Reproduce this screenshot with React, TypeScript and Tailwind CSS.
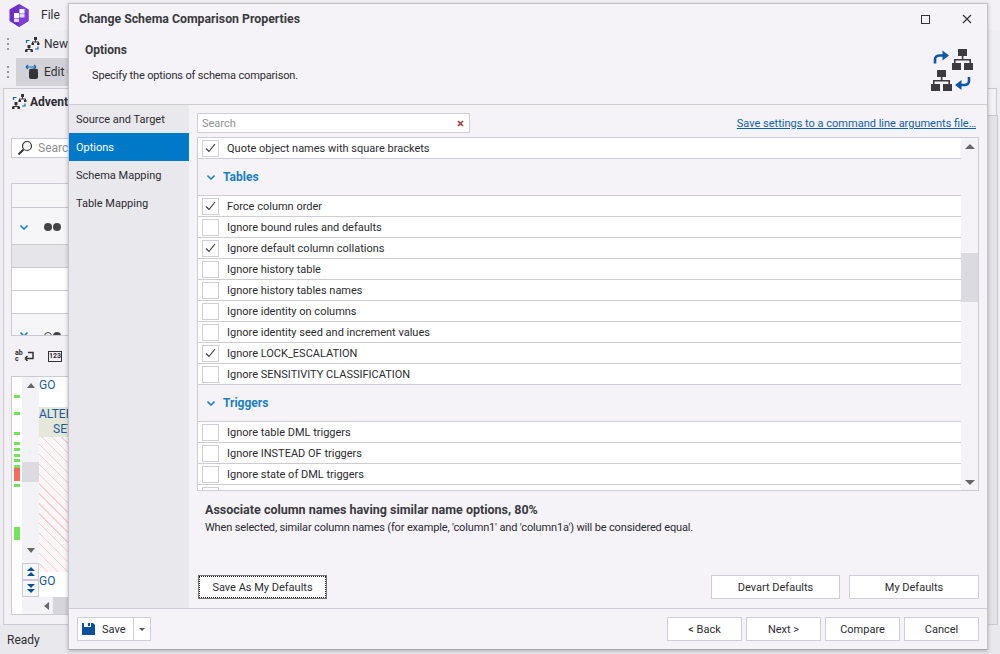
import React from "react";

function TreeIcon({ x, y }: { x: number; y: number }) {
  return (
    <g fill="#3c3c40" transform={`translate(${x} ${y})`}>
      <rect x="6" y="0" width="9" height="7" />
      <path d="M9.800 7h1.600v3H19v4h-1.600v-2.400H3.600V14H2v-4h7.800z" />
      <rect x="0" y="14" width="9" height="7" />
      <rect x="12" y="14" width="9" height="7" />
    </g>
  );
}

function CompareIcon() {
  return (
    <svg width="44" height="46" viewBox="0 0 44 46" className="block">
      <TreeIcon x={22} y={2} />
      <TreeIcon x={1} y={23} />
      <path d="M5 16.500v-4c0-2.500 2-4 4.500-4H14" fill="none" stroke="#0a58a8" strokeWidth="2.600" />
      <path d="M12.500 3.500l6.500 5-6.500 5z" fill="#0a58a8" />
      <path d="M39 30v4c0 2.500-2 4-4.500 4H30" fill="none" stroke="#0a58a8" strokeWidth="2.600" />
      <path d="M31.500 33l-6.500 5 6.500 5z" fill="#0a58a8" />
    </svg>
  );
}

function SmallCompare() {
  return (
    <svg width="15" height="15" viewBox="0 0 15 15" className="block shrink-0">
      <g fill="#333">
        <rect x="9" y="0" width="3" height="3" />
        <path d="M10 3h1v1.500h3V6.500h-1V5.500H8v1H7V4.500h3z" />
        <rect x="6.500" y="6" width="2.500" height="2" />
        <rect x="12" y="6" width="2.500" height="2" />
        <rect x="2.500" y="8" width="3" height="3" />
        <path d="M3.500 11h1v1h3v2h-1v-1H1.500v1h-1v-2h3z" />
        <rect x="0" y="13" width="2.500" height="2" />
        <rect x="5.500" y="13" width="2.500" height="2" />
      </g>
      <path d="M1.500 6V3.500h3M13 9.500V12h-3" fill="none" stroke="#0a6ab8" strokeWidth="1.200" />
    </svg>
  );
}

function Grip() {
  return (
    <div className="flex w-[3px] flex-col gap-[3px]">
      <span className="h-[2px] w-[2px] bg-[#9a9aa2]" />
      <span className="h-[2px] w-[2px] bg-[#9a9aa2]" />
      <span className="h-[2px] w-[2px] bg-[#9a9aa2]" />
    </div>
  );
}

function Chevron() {
  return (
    <svg width="8" height="5" viewBox="0 0 8 5" className="block shrink-0">
      <path d="M0.500 0.600L4 4L7.500 0.600" fill="none" stroke="#1b80c4" strokeWidth="1.500" />
    </svg>
  );
}

function Background() {
  const marks = [
    "mt-[18px] h-[3px] bg-[#6fe55a]",
    "mt-[14px] h-[3px] bg-[#6fe55a]",
    "mt-[17px] h-[3px] bg-[#6fe55a]",
    "mt-[7px] h-[3px] bg-[#6fe55a]",
    "mt-[3px] h-[3px] bg-[#6fe55a]",
    "mt-[3px] h-[3px] bg-[#6fe55a]",
    "mt-[2px] h-[3px] bg-[#6fe55a]",
    "mt-[3px] h-[3px] bg-[#6fe55a]",
    "h-[13px] bg-[#ff6a60]",
    "mt-[3px] h-[3px] bg-[#6fe55a]",
    "mt-[40px] h-[13px] bg-[#6fe55a]",
  ];
  return (
    <div className="flex h-[654px] w-[1000px] flex-col overflow-hidden bg-[#eeedf2] text-[12px] text-[#2e2e33]">
      <div className="flex h-[30px] shrink-0 items-center bg-[#f3f1f6] pl-[9px]">
        <svg width="20" height="23" viewBox="0 0 20 23" className="block shrink-0">
          <path d="M10 0L19.500 5.500V17L10 23L0.500 17V5.500z" fill="#6a2fc4" />
          <path d="M10 0L19.500 5.500V17L10 23z" fill="#7d3fd8" />
          <rect x="5" y="9" width="5" height="5" fill="#fff" />
          <rect x="5" y="14.500" width="5" height="3.500" fill="#e7d8ff" />
          <rect x="10.500" y="5" width="5" height="4" fill="#fff" />
          <rect x="10.500" y="9.500" width="5" height="4" fill="#e7d8ff" />
        </svg>
        <span className="ml-[12px]">File</span>
      </div>
      <div className="flex h-[28px] shrink-0 items-center bg-[#efeef3] pl-[7px]">
        <Grip />
        <div className="ml-[15px]"><SmallCompare /></div>
        <span className="ml-[4px]">New</span>
      </div>
      <div className="flex h-[28px] shrink-0 items-center bg-[#efeef3] pl-[7px]">
        <Grip />
        <div className="ml-[6px] flex h-[28px] w-[52px] items-center overflow-hidden whitespace-nowrap bg-[#d2d1d8] pl-[9px]">
          <svg width="15" height="16" viewBox="0 0 15 16" className="block shrink-0">
            <ellipse cx="8.500" cy="6" rx="4.500" ry="1.500" fill="#333" />
            <rect x="4" y="6" width="9" height="9" rx="2" fill="#333" />
            <path d="M1 3h10M1 3l2-2M1 3l2 2M11 3L9 1M11 3L9 5" stroke="#0a6ab8" strokeWidth="1.200" fill="none" />
          </svg>
          <span className="ml-[4px]">Edit C</span>
        </div>
      </div>
      <div className="flex h-[539px] shrink-0 pl-[3px] pr-[3px] pt-[2px]">
        <div className="flex h-[537px] w-full flex-col border border-[#cbc9d4] bg-[#f3f1f6]">
          <div className="flex h-[25px] shrink-0 items-center pl-[8px]">
            <SmallCompare />
            <span className="ml-[3px] font-bold">Adventure</span>
          </div>
          <div className="mt-[24px] ml-[7px] flex h-[20px] w-[200px] shrink-0 items-center border border-[#cbc9d4] bg-white pl-[5px]">
            <svg width="16" height="16" viewBox="0 0 16 16" className="block shrink-0">
              <circle cx="10" cy="6" r="4.500" fill="#f4f4f4" stroke="#333" strokeWidth="1.200" />
              <path d="M6.500 9.500L1.500 14.500" stroke="#333" strokeWidth="2" />
            </svg>
            <span className="ml-[5px] text-[#8d8d93]">Search</span>
          </div>
          <div className="mt-[25px] ml-[7px] flex h-[153px] w-[300px] shrink-0 flex-col overflow-hidden border border-[#cbc9d4] bg-white">
            <div className="h-[24px] shrink-0 border-b border-[#cbc9d4] bg-[#f6f5f8]" />
            <div className="flex h-[37px] shrink-0 items-center border-b border-[#cbc9d4] bg-[#f6f5f8] pl-[8px] pt-[2px]">
              <Chevron />
              <span className="ml-[16px] h-[8px] w-[8px] rounded-full bg-[#444]" />
              <span className="ml-[1px] h-[8px] w-[8px] rounded-full bg-[#444]" />
            </div>
            <div className="h-[23px] shrink-0 border-b border-[#cbc9d4] bg-[#e6e5ea]" />
            <div className="h-[23px] shrink-0 border-b border-[#cbc9d4] bg-white" />
            <div className="h-[23px] shrink-0 border-b border-[#cbc9d4] bg-white" />
            <div className="flex h-[23px] shrink-0 items-end bg-[#f6f5f8] pl-[8px]">
              <Chevron />
              <span className="ml-[16px] mb-[-3px] h-[8px] w-[8px] rounded-full border border-[#444]" />
              <span className="ml-[1px] mb-[-3px] h-[8px] w-[8px] rounded-full bg-[#444]" />
            </div>
          </div>
          <div className="flex h-[40px] shrink-0 items-center pl-[11px]">
            <div className="flex items-center">
              <div className="flex w-[9px] flex-col text-[7px] leading-[6px] font-bold">
                <span>ab</span>
                <span>c</span>
              </div>
              <svg width="10" height="10" viewBox="0 0 10 10" className="block shrink-0">
                <path d="M4 1.500h5v6H1M1 7.500l2.500-2.500M1 7.500l2.500 2.500" fill="none" stroke="#333" strokeWidth="1.500" />
              </svg>
            </div>
            <div className="ml-[14px] flex h-[11px] w-[14px] items-center justify-center border border-[#333] text-[7px] leading-none font-bold">123</div>
          </div>
          <div className="ml-[7px] flex h-[239px] w-[300px] shrink-0 border border-[#cbc9d4] bg-white">
            <div className="flex w-[10px] shrink-0 flex-col px-[2px]">
              {marks.map((c, i) => (
                <span key={i} className={c} />
              ))}
            </div>
            <div className="flex min-w-0 flex-1 flex-col">
              <div className="flex h-[220px] shrink-0">
                <div className="flex w-[17px] shrink-0 flex-col items-center bg-[#f3f2f7]">
                  <span className="mt-[6px] h-0 w-0 border-x-[4px] border-b-[5px] border-x-transparent border-b-[#666]" />
                  <span className="mt-[74px] h-[20px] w-full bg-[#dcdbe1]" />
                  <span className="mt-[66px] h-0 w-0 border-x-[4px] border-t-[5px] border-x-transparent border-t-[#666]" />
                  <div className="mt-[10px] flex h-[17px] w-[17px] shrink-0 flex-col items-center justify-center gap-[1px] border border-[#cbc9d4] bg-[#f7f6f9]">
                    <span className="h-0 w-0 border-x-[4px] border-b-[4px] border-x-transparent border-b-[#0a4f9c]" />
                    <span className="h-0 w-0 border-x-[4px] border-b-[4px] border-x-transparent border-b-[#0a4f9c]" />
                  </div>
                  <div className="flex h-[17px] w-[17px] shrink-0 flex-col items-center justify-center gap-[1px] border border-[#cbc9d4] bg-[#f7f6f9]">
                    <span className="h-0 w-0 border-x-[4px] border-t-[4px] border-x-transparent border-t-[#0a4f9c]" />
                    <span className="h-0 w-0 border-x-[4px] border-t-[4px] border-x-transparent border-t-[#0a4f9c]" />
                  </div>
                </div>
                <div className="flex flex-col text-[#1a5a9e]">
                  <span className="h-[30px] leading-[16px]">GO</span>
                  <div className="h-[30px] w-[200px] bg-[#e4e7d9]">
                    <div className="h-[15px] leading-[15px]">ALTER</div>
                    <div className="pl-[14px] leading-[15px]">SET</div>
                  </div>
                  <div className="h-[135px] w-[200px] bg-[repeating-linear-gradient(45deg,#fbf6f7_0px,#fbf6f7_6px,#f7cdcd_6px,#f7cdcd_7px)]" />
                  <span className="mt-[1px] leading-[16px]">GO</span>
                </div>
              </div>
              <div className="flex h-[17px] shrink-0 items-center bg-[#f3f2f7] pl-[22px]">
                <span className="h-0 w-0 border-y-[4px] border-r-[5px] border-y-transparent border-r-[#666]" />
                <span className="ml-[4px] h-[17px] w-[100px] bg-[#d6d5db]" />
              </div>
            </div>
          </div>
        </div>
      </div>
      <div className="flex h-[29px] shrink-0 items-center bg-[#e9e8ed] pl-[7px]">Ready</div>
    </div>
  );
}

function Check({ on }: { on?: boolean }) {
  return (
    <span className="flex h-[17px] w-[17px] shrink-0 items-center justify-center border border-[#cfcdd7] bg-white">
      {on && (
        <svg width="11" height="10" viewBox="0 0 11 10" className="block">
          <path d="M1 5.500L4 8.500L10 1" fill="none" stroke="#333" strokeWidth="1.100" />
        </svg>
      )}
    </span>
  );
}

function Row({ label, on }: { label: string; on?: boolean }) {
  return (
    <div className="flex h-[21px] shrink-0 items-center border-b border-[#cdcbd6] bg-white pl-[4px]">
      <Check on={on} />
      <span className="ml-[8px] whitespace-nowrap pt-[2px]">{label}</span>
    </div>
  );
}

function Group({ label }: { label: string }) {
  return (
    <div className="flex h-[37px] shrink-0 items-center border-b border-[#cdcbd6] pl-[9px]">
      <Chevron />
      <span className="ml-[8px] text-[12px] font-bold text-[#1a7fc0]">{label}</span>
    </div>
  );
}

function Btn({ label, w, focus }: { label: string; w: string; focus?: boolean }) {
  return (
    <button className={`flex h-[24px] items-center justify-center border bg-white pt-[2px] ${w} ${focus ? "border-[#777] outline-1 -outline-offset-2 outline-dotted outline-[#222]" : "border-[#cfcdd7]"}`}>
      {label}
    </button>
  );
}

function Dialog() {
  return (
    <div className="absolute left-[68px] top-[3px] flex h-[647px] w-[920px] flex-col border border-[#c4c3cc] border-b-[#a5a4ac] bg-[#f5f3f8] text-[11px] text-[#2b2b30] shadow-[0_1px_4px_rgba(0,0,0,0.25)]">
      <div className="h-[101px] shrink-0 border-b border-[#cdcbd6]">
        <div className="flex h-[30px] items-center pl-[10px] pr-[15px]">
          <span className="text-[12.3px] font-bold text-[#3a3a40]">Change Schema Comparison Properties</span>
          <svg width="9" height="9" viewBox="0 0 9 9" className="ml-auto mr-[32px] block">
            <rect x="0.500" y="0.500" width="8" height="8" fill="none" stroke="#333" />
          </svg>
          <svg width="10" height="10" viewBox="0 0 10 10" className="block">
            <path d="M1 1l8 8M9 1l-8 8" stroke="#333" strokeWidth="1.200" />
          </svg>
        </div>
        <div className="flex">
          <div className="flex-1">
            <div className="mt-[7px] pl-[16px] text-[12px] font-bold text-[#3a3a40]">Options</div>
            <div className="mt-[9px] pl-[23px] tracking-[-0.15px]">Specify the options of schema comparison.</div>
          </div>
          <div className="mr-[13px] mt-[13px]"><CompareIcon /></div>
        </div>
      </div>
      <div className="flex h-[503px] shrink-0">
        <div className="w-[120px] shrink-0 bg-[#e9e8ec]">
          <div className="flex h-[28px] items-center pl-[7px] pt-[2px]">Source and Target</div>
          <div className="flex h-[28px] items-center bg-[#0079c8] pl-[7px] pt-[2px] text-white">Options</div>
          <div className="flex h-[28px] items-center pl-[7px] pt-[2px]">Schema Mapping</div>
          <div className="flex h-[28px] items-center pl-[7px] pt-[2px]">Table Mapping</div>
        </div>
        <div className="flex flex-1 flex-col px-[8px]">
          <div className="mt-[8px] flex h-[20px] shrink-0 items-center justify-between">
            <div className="flex h-[20px] w-[273px] items-center justify-between border border-[#cfcdd7] bg-white pl-[4px] pr-[5px]">
              <span className="pt-[2px] text-[#8f8f95]">Search</span>
              <svg width="7" height="7" viewBox="0 0 7 7" className="block">
                <path d="M1 1l5 5M6 1l-5 5" stroke="#b0322c" strokeWidth="1.600" />
              </svg>
            </div>
            <a className="mr-[3px] pt-[2px] text-[#0f5fa8] underline">Save settings to a command line arguments file…</a>
          </div>
          <div className="mt-[4px] flex h-[354px] shrink-0 overflow-hidden border border-[#cdcbd6]">
            <div className="flex min-w-0 flex-1 flex-col overflow-hidden">
              <Row label="Quote object names with square brackets" on />
              <Group label="Tables" />
              <Row label="Force column order" on />
              <Row label="Ignore bound rules and defaults" />
              <Row label="Ignore default column collations" on />
              <Row label="Ignore history table" />
              <Row label="Ignore history tables names" />
              <Row label="Ignore identity on columns" />
              <Row label="Ignore identity seed and increment values" />
              <Row label="Ignore LOCK_ESCALATION" on />
              <Row label="Ignore SENSITIVITY CLASSIFICATION" />
              <Group label="Triggers" />
              <Row label="Ignore table DML triggers" />
              <Row label="Ignore INSTEAD OF triggers" />
              <Row label="Ignore state of DML triggers" />
              <Row label="" />
            </div>
            <div className="flex w-[17px] shrink-0 flex-col items-center bg-[#f5f3f8]">
              <span className="mt-[6px] h-0 w-0 border-x-[5px] border-b-[5px] border-x-transparent border-b-[#666]" />
              <span className="mt-[104px] h-[49px] w-full bg-[#dbdae0]" />
              <span className="mt-auto mb-[5px] h-0 w-0 border-x-[5px] border-t-[5px] border-x-transparent border-t-[#666]" />
            </div>
          </div>
          <div className="mt-[10px] pl-[8px] text-[12.5px] font-bold text-[#3a3a40]">Associate column names having similar name options, 80%</div>
          <div className="pl-[8px] tracking-[-0.15px]">When selected, similar column names (for example, 'column1' and 'column1a') will be considered equal.</div>
          <div className="mt-auto mb-[9px] flex h-[24px] shrink-0 items-center pl-[1px]">
            <Btn label="Save As My Defaults" w="w-[129px]" focus />
            <div className="ml-auto flex gap-[9px]">
              <Btn label="Devart Defaults" w="w-[129px]" />
              <Btn label="My Defaults" w="w-[130px]" />
            </div>
          </div>
        </div>
      </div>
      <div className="flex flex-1 items-center border-t border-[#cdcbd6] pl-[8px] pr-[8px]">
        <div className="flex h-[24px] items-stretch border border-[#cfcdd7] bg-white">
          <div className="flex w-[56px] items-center border-r border-[#cfcdd7] pl-[4px]">
            <svg width="13" height="12" viewBox="0 0 13 12" className="block shrink-0">
              <path d="M0 0h2v4h7V0h2l2 2v10H0z" fill="#0a4f9c" />
              <rect x="6" y="0" width="2" height="3" fill="#0a4f9c" />
            </svg>
            <span className="ml-[7px] pt-[2px]">Save</span>
          </div>
          <div className="flex w-[16px] items-center justify-center">
            <span className="h-0 w-0 border-x-[3px] border-t-[3px] border-x-transparent border-t-[#555]" />
          </div>
        </div>
        <div className="ml-auto flex gap-[4px]">
          <Btn label="< Back" w="w-[75px]" />
          <Btn label="Next >" w="w-[75px]" />
          <Btn label="Compare" w="w-[75px]" />
          <Btn label="Cancel" w="w-[75px]" />
        </div>
      </div>
    </div>
  );
}

export default function App() {
  return (
    <div className="relative h-[654px] w-[1000px] overflow-hidden font-['Roboto','Noto_Sans',sans-serif]">
      <Background />
      <div className="absolute right-[2px] top-[115px] h-[510px] w-[14px] border-y border-r border-[#cbc9d4] bg-[#e3e2e7]" />
      <Dialog />
    </div>
  );
}
